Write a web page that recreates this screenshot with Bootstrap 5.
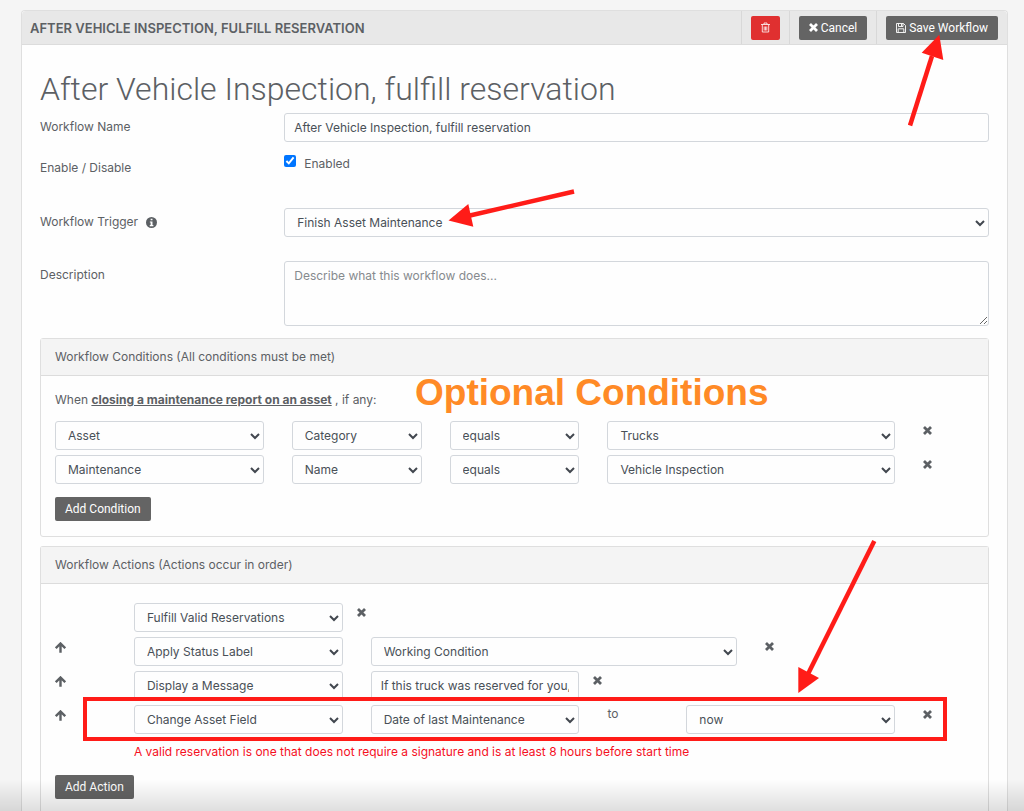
<!DOCTYPE html>
<html lang="en">
<head>
<meta charset="utf-8">
<meta name="viewport" content="width=device-width, initial-scale=1">
<title>Edit Workflow</title>
<link href="https://cdn.jsdelivr.net/npm/bootstrap@5.3.0/dist/css/bootstrap.min.css" rel="stylesheet">
<style>
body { font-family: Inter, "Liberation Sans", sans-serif; font-size: 12px; line-height: 18px; color: #5c6064; background: #f5f5f5; }
.panel { background: #fefefe; border: 1px solid #dfdfdf; border-bottom: 0; border-radius: 4px 4px 0 0; margin: 10px 16px 0 21px; }
.panel-head { background: #e8e8e8; border-bottom: 1px solid #dcdcdc; border-radius: 4px 4px 0 0; height: 34px; }
.panel-name { font-size: 13px; line-height: 18px; font-weight: 600; padding-left: 8px; margin: 0; }
.tool { border-left: 1px solid #d8d8d8; padding: 0 9px; height: 33px; }
.panel-content { padding: 25px 18px 0; }
.title { font-family: Roboto, Inter, sans-serif; font-size: 32px; line-height: 38px; font-weight: 300; margin: 0 0 5px; }
.btn-flat { font-family: Roboto, Inter, sans-serif; font-size: 12px; font-weight: 400; line-height: 18px; height: 24px; padding: 3px 10px; border: 0; border-radius: 2px; color: #fff; background: #646464; }
.btn-flat:hover { color: #fff; background: #505050; }
.btn-flat.del { background: #e03030; }
.btn-icon { gap: 3px; }
.row { --bs-gutter-x: 28px; }
.form-control, .form-select { font-size: 12px; line-height: 17px; height: 29px; border: 1px solid #d3d7dc; border-radius: 3px; color: #495057; padding: 5px 9px; background-color: #fefefe; }
.form-select { padding: 5px 20px 5px 12px; background-position: right 3px center; background-size: 10px 8px;
  background-image: url("data:image/svg+xml,%3csvg xmlns='http://www.w3.org/2000/svg' viewBox='0 0 10 8'%3e%3cpath fill='none' stroke='%2342474f' stroke-width='2' d='M1 2l4 4 4-4'/%3e%3c/svg%3e"); }
textarea.form-control { height: 65px; resize: vertical; }
textarea.form-control::placeholder { color: #868a8e; }
.field { margin-bottom: 24px; }
.field-label { padding-top: 5px; }
.enable-row { margin-bottom: 31px; }
.enable-label { padding-top: 9px; }
.enable-check { padding-top: 5px; }
.desc-row { margin-bottom: 12px; }
.box { border: 1px solid #dfdfdf; border-radius: 3px; }
.box-head { background: #f4f4f4; border-bottom: 1px solid #dcdcdc; padding: 9px 14px; }
.box-body { padding: 15px 14px; }
.box-gap { margin-top: 9px; }
.line { margin-bottom: 5px; }
.icon-btn { border: 0; background: none; padding: 0; color: #5c6064; line-height: 0; display: block; }
.icon-btn svg { display: block; }
.drop { padding-top: 5px; }
.check { width: 12px; height: 12px; accent-color: #0075ff; margin: 0; }
.mark-over { position: absolute; pointer-events: none; z-index: 5; overflow: visible; }
.to-save { right: 59px; top: 19px; }
.to-trigger { left: 164px; top: -18px; }
.to-now { right: 111px; top: -166px; width: 80px; }
.callout { left: 374px; top: -4px; font: 700 37px/42px "Liberation Sans", sans-serif; color: #ff8a26; white-space: nowrap; }
.frame { inset: -8px 41px -7px 42px; border: 4px solid #ff1c18; }
.warn { color: #f5101e; padding-top: 4px; padding-bottom: 14px; }
.fade-end { position: fixed; left: 0; right: 0; bottom: 0; height: 32px; pointer-events: none; background: linear-gradient(rgba(0,0,0,0), rgba(0,0,0,.12)); }
</style>
</head>
<body>
<svg class="d-none" xmlns="http://www.w3.org/2000/svg">
  <symbol id="x" viewBox="0 0 9 9"><path d="M1 1l7 7M8 1L1 8" stroke="currentColor" stroke-width="2.800" fill="none"/></symbol>
  <symbol id="up" viewBox="0 0 11 11"><path d="M5.500 10.700V2M.8 6.200l4.700-4.700 4.700 4.700" stroke="currentColor" stroke-width="2.400" fill="none"/></symbol>
</svg>
<main class="min-vh-100 d-flex flex-column">
<section class="panel flex-grow-1 d-flex flex-column">
  <header class="panel-head d-flex align-items-center">
    <h2 class="panel-name flex-grow-1">AFTER VEHICLE INSPECTION, FULFILL RESERVATION</h2>
    <div class="tool d-flex align-items-center"><button type="button" class="btn btn-flat del d-flex align-items-center" aria-label="Delete">
      <svg width="9" height="11" viewBox="0 0 9 11" fill="none" stroke="currentColor"><path d="M0 2.500h9M3 2.500v-1.500h3v1.500M1.300 2.500v7.500h6.400V2.500M3.200 4.500v4M4.500 4.500v4M5.800 4.500v4" stroke-width=".8"/></svg></button></div>
    <div class="tool d-flex align-items-center"><button type="button" class="btn btn-flat btn-icon d-flex align-items-center"><svg width="9" height="9"><use href="#x"/></svg>Cancel</button></div>
    <div class="tool d-flex align-items-center position-relative"><button type="button" class="btn btn-flat btn-icon d-flex align-items-center">
      <svg width="10" height="10" viewBox="0 0 10 10" fill="none" stroke="currentColor" stroke-width=".9"><path d="M.5.5h7l2 2v7h-9zM2.500.5v3h4.500v-3M5.500 1v2M2.200 9.500V5.800h5.600v3.700"/></svg>Save Workflow</button>
      <svg class="mark-over to-save" width="48" height="96" viewBox="900 30 48 96"><path d="M910 125.500L932 56" stroke="#ff1c18" stroke-width="4.500"/><path d="M939.300 34.700L921.700 52.700 943.300 60z" fill="#ff1c18"/></svg>
    </div>
  </header>
  <form class="panel-content flex-grow-1 d-flex flex-column">
    <h1 class="title">After Vehicle Inspection, fulfill reservation</h1>
    <div class="row mb-2">
      <div class="col-3 field-label"><label for="wname">Workflow Name</label></div>
      <div class="col-9"><input id="wname" class="form-control" value="After Vehicle Inspection, fulfill reservation"></div>
    </div>
    <div class="row enable-row">
      <span class="col-3 enable-label">Enable / Disable</span>
      <div class="col-9 enable-check"><div class="d-flex gap-2"><input type="checkbox" class="check" id="en" checked><label for="en">Enabled</label></div></div>
    </div>
    <div class="row field">
      <div class="col-3 field-label"><label for="trig">Workflow Trigger
        <svg class="ms-1" width="11" height="11" viewBox="0 0 10 10"><circle cx="5" cy="5" r="5" fill="currentColor"/><path d="M4.200 1.500h1.700V3H4.200zM3.500 4h2.400v3.200h.8v1.100H3.400V7.200h.8V5.100h-.7z" fill="#fff"/></svg></label></div>
      <div class="col-9"><div class="position-relative"><select id="trig" class="form-select"><option>Finish Asset Maintenance</option></select>
        <svg class="mark-over to-trigger" width="128" height="40" viewBox="448 190 128 40"><path d="M574 191.500L470 215.500" stroke="#ff1c18" stroke-width="4.500"/><path d="M448.500 220.500L468.300 204 473.300 226.700z" fill="#ff1c18"/></svg></div></div>
    </div>
    <div class="row desc-row">
      <div class="col-3 field-label"><label for="desc">Description</label></div>
      <div class="col-9"><textarea id="desc" class="form-control" placeholder="Describe what this workflow does..."></textarea></div>
    </div>

    <section class="box">
      <div class="box-head">Workflow Conditions (All conditions must be met)</div>
      <div class="box-body position-relative">
        <p class="mb-2">When <b class="text-decoration-underline">closing a maintenance report on an asset</b> , if any:</p>
        <div class="mark-over callout">Optional Conditions</div>
        <div class="row line pt-1">
          <div class="col-3"><select class="form-select" aria-label="Source"><option>Asset</option></select></div>
          <div class="col-2"><select class="form-select" aria-label="Field"><option>Category</option></select></div>
          <div class="col-2"><select class="form-select" aria-label="Operator"><option>equals</option></select></div>
          <div class="col-4"><select class="form-select" aria-label="Value"><option>Trucks</option></select></div>
          <div class="col-1 drop"><button type="button" class="icon-btn" aria-label="Remove"><svg width="9" height="9"><use href="#x"/></svg></button></div>
        </div>
        <div class="row line">
          <div class="col-3"><select class="form-select" aria-label="Source"><option>Maintenance</option></select></div>
          <div class="col-2"><select class="form-select" aria-label="Field"><option>Name</option></select></div>
          <div class="col-2"><select class="form-select" aria-label="Operator"><option>equals</option></select></div>
          <div class="col-4"><select class="form-select" aria-label="Value"><option>Vehicle Inspection</option></select></div>
          <div class="col-1 drop"><button type="button" class="icon-btn" aria-label="Remove"><svg width="9" height="9"><use href="#x"/></svg></button></div>
        </div>
        <button type="button" class="btn btn-flat mt-2">Add Condition</button>
      </div>
    </section>

    <section class="box box-gap flex-grow-1 border-bottom-0">
      <div class="box-head">Workflow Actions (Actions occur in order)</div>
      <div class="box-body">
        <div class="row line pt-1">
          <div class="col-3 offset-1"><select class="form-select" aria-label="Action"><option>Fulfill Valid Reservations</option></select></div>
          <div class="col-1 drop ps-0"><button type="button" class="icon-btn" aria-label="Remove"><svg width="9" height="9"><use href="#x"/></svg></button></div>
        </div>
        <div class="row line">
          <div class="col-1 drop"><button type="button" class="icon-btn" aria-label="Move up"><svg width="11" height="11"><use href="#up"/></svg></button></div>
          <div class="col-3"><select class="form-select" aria-label="Action"><option>Apply Status Label</option></select></div>
          <div class="col-5"><select class="form-select" aria-label="Label"><option>Working Condition</option></select></div>
          <div class="col-1 drop"><button type="button" class="icon-btn" aria-label="Remove"><svg width="9" height="9"><use href="#x"/></svg></button></div>
        </div>
        <div class="row line">
          <div class="col-1 drop"><button type="button" class="icon-btn" aria-label="Move up"><svg width="11" height="11"><use href="#up"/></svg></button></div>
          <div class="col-3"><select class="form-select" aria-label="Action"><option>Display a Message</option></select></div>
          <div class="col-3"><input class="form-control" aria-label="Message" value="If this truck was reserved for you,"></div>
          <div class="col-1 drop ps-0"><button type="button" class="icon-btn" aria-label="Remove"><svg width="9" height="9"><use href="#x"/></svg></button></div>
        </div>
        <div class="row line position-relative">
          <div class="col-1 drop"><button type="button" class="icon-btn" aria-label="Move up"><svg width="11" height="11"><use href="#up"/></svg></button></div>
          <div class="col-3"><select class="form-select" aria-label="Action"><option>Change Asset Field</option></select></div>
          <div class="col-3"><select class="form-select" aria-label="Field"><option>Date of last Maintenance</option></select></div>
          <div class="col-1">to</div>
          <div class="col-3"><select class="form-select" aria-label="Value"><option>now</option></select></div>
          <div class="col-1 drop"><button type="button" class="icon-btn" aria-label="Remove"><svg width="9" height="9"><use href="#x"/></svg></button></div>
          <div class="mark-over frame w-auto p-0 m-0"></div>
          <svg class="mark-over to-now p-0 m-0" width="80" height="156" viewBox="797 538 80 156"><path d="M874.300 540L808 673" stroke="#ff1c18" stroke-width="4.500"/><path d="M798.300 692V666L819 677z" fill="#ff1c18"/></svg>
        </div>
        <div class="row"><div class="col-11 offset-1 warn">A valid reservation is one that does not require a signature and is at least 8 hours before start time</div></div>
        <button type="button" class="btn btn-flat">Add Action</button>
      </div>
    </section>
  </form>
</section>
</main>
<div class="fade-end"></div>
<script src="https://cdn.jsdelivr.net/npm/bootstrap@5.3.0/dist/js/bootstrap.bundle.min.js"></script>
</body>
</html>
